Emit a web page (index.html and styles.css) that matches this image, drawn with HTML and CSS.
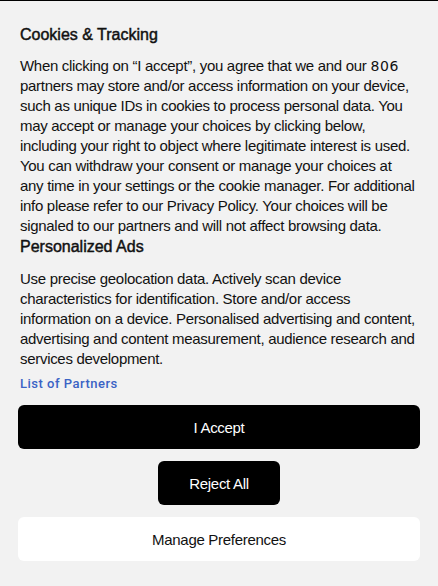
FILE: index.html
```html
<!DOCTYPE html>
<html lang="en">
<head>
<meta charset="utf-8">
<title>Cookies &amp; Tracking</title>
<link rel="stylesheet" href="styles.css">
</head>
<body>
<div class="consent">
  <h2 class="title first">Cookies &amp; Tracking</h2>
  <p class="text">When clicking on “I accept”, you agree that we and our <span class="count">806</span> partners may store and/or access information on your device, such as unique IDs in cookies to process personal data. You may accept or manage your choices by clicking below, including your right to object where legitimate interest is used. You can withdraw your consent or manage your choices at any time in your settings or the cookie manager. For additional info please refer to our Privacy Policy. Your choices will be signaled to our partners and will not affect browsing data.</p>
  <h2 class="title second">Personalized Ads</h2>
  <p class="text">Use precise geolocation data. Actively scan device characteristics for identification. Store and/or access information on a device. Personalised advertising and content, advertising and content measurement, audience research and services development.</p>
  <a class="partners" href="#">List of Partners</a>
  <div class="actions">
    <button class="btn btn-dark btn-wide">I Accept</button>
    <button class="btn btn-dark btn-small">Reject All</button>
    <button class="btn btn-light btn-wide">Manage Preferences</button>
  </div>
</div>
</body>
</html>
```
FILE: styles.css
```css
html, body {
  margin: 0;
  padding: 0;
  background: #f2f2f2;
}
body {
  font-family: "Liberation Sans", Arial, sans-serif;
  color: #111;
  border-top: 1px solid #000;
  min-height: 585px;
}
.consent {
  padding: 24px 18px 0;
  display: flex;
  flex-direction: column;
}
.title {
  margin: 0;
  padding: 0 2px;
  font-size: 16px;
  line-height: 20px;
  font-weight: normal;
  -webkit-text-stroke: 0.45px #111;
  color: #111;
}
.title.first { margin-bottom: 11px; }
.title.second { margin-top: 1px; margin-bottom: 12px; }
.text {
  margin: 0;
  padding: 0 2px;
  font-size: 15px;
  line-height: 20px;
  letter-spacing: -0.3px;
}
.count {
  font-family: "DejaVu Sans", sans-serif;
  font-size: 14px;
  letter-spacing: 0.6px;
}
.partners {
  margin: 6px 2px 0;
  font-family: Roboto, "Liberation Sans", sans-serif;
  font-size: 13px;
  line-height: 18px;
  font-weight: 500;
  letter-spacing: 0.5px;
  color: #3b63c5;
  text-decoration: none;
  align-self: flex-start;
}
.actions {
  margin-top: 12px;
  display: flex;
  flex-direction: column;
  align-items: center;
  gap: 12px;
}
.btn {
  height: 44px;
  border: none;
  border-radius: 6px;
  font-family: "Liberation Sans", Arial, sans-serif;
  font-size: 15px;
  letter-spacing: -0.3px;
  padding: 0;
  cursor: pointer;
}
.btn-wide { width: 100%; }
.btn-small { width: 122px; }
.btn-dark {
  background: #000;
  color: #fff;
}
.btn-light {
  background: #fff;
  color: #111;
}
```
